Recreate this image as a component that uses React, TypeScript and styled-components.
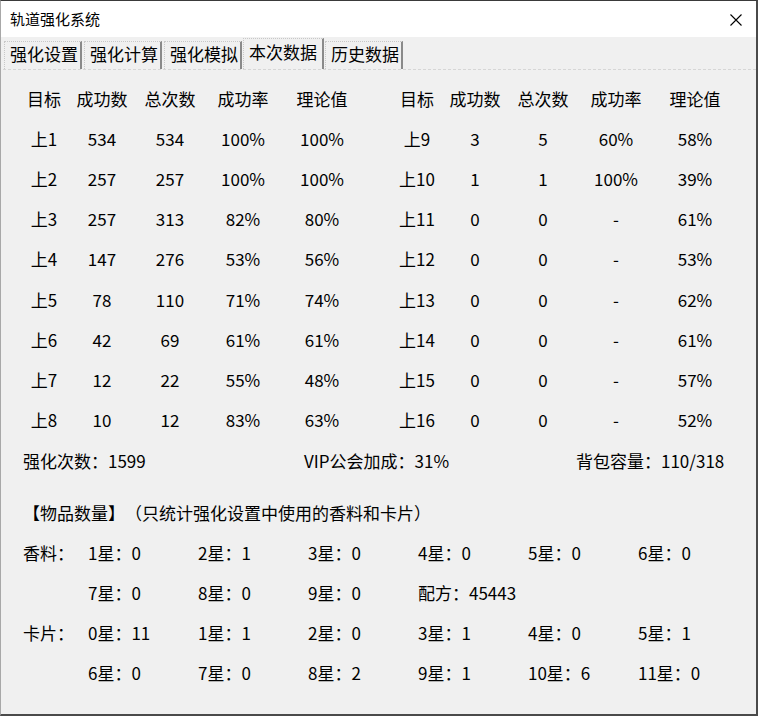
import React from "react";
import styled, { createGlobalStyle } from "styled-components";

const Global = createGlobalStyle`
  html, body { margin: 0; padding: 0; background: #f0f0f0; }
  body {
    font-family: "Noto Sans CJK SC", "Noto Sans", sans-serif;
    color: #000;
    text-spacing-trim: space-all;
  }
`;

const Frame = styled.div`
  width: 758px;
  height: 716px;
  box-sizing: border-box;
  border-top: 1px solid #3a3a3a;
  border-left: 1px solid #a8a8a8;
  border-right: 2px solid #4a4a4a;
  border-bottom: 2px solid #4a4a4a;
  background: #f0f0f0;
  display: flex;
  flex-direction: column;
  overflow: hidden;
`;

const TitleBar = styled.div`
  height: 36px;
  background: #fff;
  display: flex;
  align-items: center;
  justify-content: space-between;
  padding: 0 14px 0 9px;
  font-size: 15px;
  line-height: 20px;
`;

const CloseIcon = styled.svg`
  width: 12px;
  height: 12px;
  margin-top: 1px;
`;

const TabStrip = styled.div`
  height: 32px;
  display: flex;
  align-items: flex-end;
  padding-left: 3px;
  background: #f0f0f0;
`;

const Tab = styled.div<{ $active?: boolean }>`
  box-sizing: border-box;
  height: ${(p) => (p.$active ? 31 : 28)}px;
  width: ${(p) => (p.$active ? 81 : 78)}px;
  padding: 0 0 ${(p) => (p.$active ? 5 : 3)}px 5px;
  margin-right: ${(p) => (p.$active ? 1 : 2)}px;
  margin-left: ${(p) => (p.$active ? -1 : 0)}px;
  border-left: 1px dotted #c8c8c8;
  border-top: 1px dotted #c8c8c8;
  border-right: 2px solid #8a8a8a;
  font-size: 17px;
  line-height: 22px;
  display: flex;
  align-items: center;
  white-space: nowrap;
  background: #f0f0f0;
  position: relative;
  z-index: ${(p) => (p.$active ? 1 : 0)};
`;

const Panel = styled.div`
  flex: 1;
  border-top: 1px dashed #d6d6d6;
  margin: 0 0 0 2px;
  padding: 8px 0 0 12px;
  font-size: 17px;
`;

const Tables = styled.div`
  display: flex;
`;

const Half = styled.div`
  width: 373px;
  flex-shrink: 0;
  display: grid;
  grid-template-columns: 58px 58px 78px 68px 90px;
  grid-template-rows: 41px repeat(8, 40.15px);
  align-items: center;
  justify-items: center;
  line-height: 22px;
`;

const Cell = styled.div`
  white-space: nowrap;
`;

const Summary = styled.div`
  display: grid;
  grid-template-columns: 281px 272px auto;
  height: 41px;
  align-items: center;
  padding: 0 0 0 8px;
  line-height: 22px;
  white-space: nowrap;
`;

const Heading = styled.div`
  margin-top: 12px;
  height: 40px;
  display: flex;
  align-items: center;
  padding-left: 8px;
  line-height: 22px;
  white-space: nowrap;
`;

const Items = styled.div`
  display: grid;
  grid-template-columns: 65px repeat(6, 110px);
  grid-auto-rows: 40px;
  align-items: center;
  padding-left: 8px;
  line-height: 22px;
  white-space: nowrap;
`;

const left = [
  ["上1", "534", "534", "100%", "100%"],
  ["上2", "257", "257", "100%", "100%"],
  ["上3", "257", "313", "82%", "80%"],
  ["上4", "147", "276", "53%", "56%"],
  ["上5", "78", "110", "71%", "74%"],
  ["上6", "42", "69", "61%", "61%"],
  ["上7", "12", "22", "55%", "48%"],
  ["上8", "10", "12", "83%", "63%"],
];
const right = [
  ["上9", "3", "5", "60%", "58%"],
  ["上10", "1", "1", "100%", "39%"],
  ["上11", "0", "0", "-", "61%"],
  ["上12", "0", "0", "-", "53%"],
  ["上13", "0", "0", "-", "62%"],
  ["上14", "0", "0", "-", "61%"],
  ["上15", "0", "0", "-", "57%"],
  ["上16", "0", "0", "-", "52%"],
];
const headers = ["目标", "成功数", "总次数", "成功率", "理论值"];

const itemRows: [string, string[]][] = [
  ["香料：", ["1星：0", "2星：1", "3星：0", "4星：0", "5星：0", "6星：0"]],
  ["", ["7星：0", "8星：0", "9星：0", "配方：45443", "", ""]],
  ["卡片：", ["0星：11", "1星：1", "2星：0", "3星：1", "4星：0", "5星：1"]],
  ["", ["6星：0", "7星：0", "8星：2", "9星：1", "10星：6", "11星：0"]],
];

function DataHalf({ rows }: { rows: string[][] }) {
  return (
    <Half>
      {headers.map((h) => (
        <Cell key={h}>{h}</Cell>
      ))}
      {rows.map((r, i) => r.map((c, j) => <Cell key={`${i}-${j}`}>{c}</Cell>))}
    </Half>
  );
}

export default function App() {
  const tabs = ["强化设置", "强化计算", "强化模拟", "本次数据", "历史数据"];
  return (
    <>
      <Global />
      <Frame>
        <TitleBar>
          <span>轨道强化系统</span>
          <CloseIcon viewBox="0 0 12 12">
            <path d="M0.5 0.5 L11.5 11.5 M11.5 0.5 L0.5 11.5" stroke="#000" strokeWidth="1.1" fill="none" />
          </CloseIcon>
        </TitleBar>
        <TabStrip>
          {tabs.map((t) => (
            <Tab key={t} $active={t === "本次数据"}>
              {t}
            </Tab>
          ))}
        </TabStrip>
        <Panel>
          <Tables>
            <DataHalf rows={left} />
            <DataHalf rows={right} />
          </Tables>
          <Summary>
            <span>强化次数：1599</span>
            <span>VIP公会加成：31%</span>
            <span>背包容量：110/318</span>
          </Summary>
          <Heading>【物品数量】（只统计强化设置中使用的香料和卡片）</Heading>
          <Items>
            {itemRows.map(([label, cells], i) => (
              <React.Fragment key={i}>
                <span>{label}</span>
                {cells.map((c, j) => (
                  <span key={j}>{c}</span>
                ))}
              </React.Fragment>
            ))}
          </Items>
        </Panel>
      </Frame>
    </>
  );
}
